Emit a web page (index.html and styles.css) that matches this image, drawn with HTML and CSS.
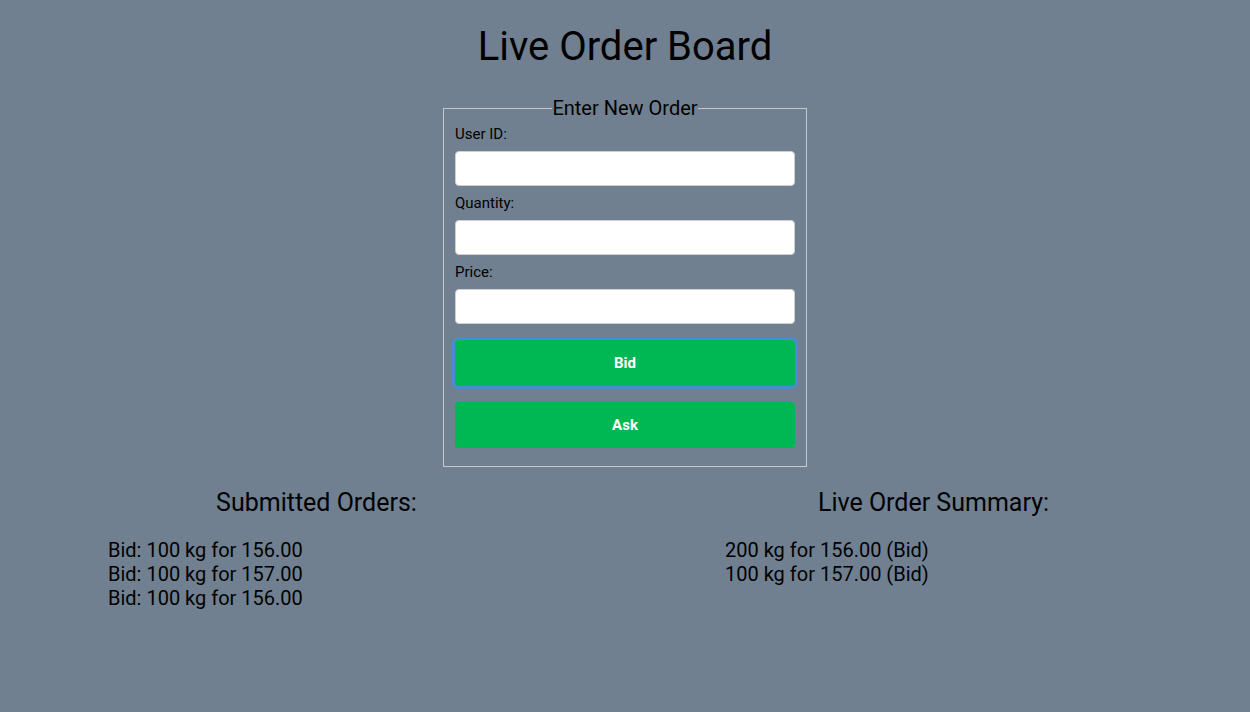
FILE: index.html
```html
<!DOCTYPE html>
<html lang="en">
<head>
<meta charset="utf-8">
<title>Live Order Board</title>
<link rel="stylesheet" href="styles.css">
</head>
<body>
<h1 class="title">Live Order Board</h1>
<form class="order-form">
  <fieldset class="order-fieldset">
    <legend class="order-legend">Enter New Order</legend>
    <label class="field-label field-label-first" for="userId">User ID:</label>
    <input class="field-input" id="userId" type="text">
    <label class="field-label" for="qty">Quantity:</label>
    <input class="field-input" id="qty" type="text">
    <label class="field-label" for="price">Price:</label>
    <input class="field-input" id="price" type="text">
    <button class="order-btn order-btn-focus" type="button">Bid</button>
    <button class="order-btn" type="button">Ask</button>
  </fieldset>
</form>
<div class="columns">
  <section class="column">
    <h2 class="column-title">Submitted Orders:</h2>
    <ul class="order-list">
      <li>Bid: 100 kg for 156.00</li>
      <li>Bid: 100 kg for 157.00</li>
      <li>Bid: 100 kg for 156.00</li>
    </ul>
  </section>
  <section class="column">
    <h2 class="column-title">Live Order Summary:</h2>
    <ul class="order-list">
      <li>200 kg for 156.00 (Bid)</li>
      <li>100 kg for 157.00 (Bid)</li>
    </ul>
  </section>
</div>
</body>
</html>
```

FILE: styles.css
```css
html {
  background: #708090;
}
body {
  margin: 8px;
  font-family: Roboto, "Liberation Sans", sans-serif;
  color: #000;
}
.title {
  font-size: 40px;
  font-weight: 400;
  text-align: center;
  margin: 16px 0 27px;
  line-height: 46px;
}
.order-form {
  display: flex;
  justify-content: center;
}
.order-fieldset {
  width: 340px;
  margin: 0;
  border: 1px solid #c8c8c8;
  padding: 0 11px 18px;
  display: flex;
  flex-direction: column;
}
.order-legend {
  font-size: 20px;
  padding: 0;
  margin: 0 auto;
  line-height: 23px;
}
.field-label {
  font-size: 15px;
  line-height: 17px;
  margin: 9px 0 8px;
}
.field-label-first {
  margin-top: 5.5px;
}
.field-input {
  box-sizing: border-box;
  width: 340px;
  height: 35px;
  border: 1px solid #cfcfcf;
  border-radius: 4px;
  background: #fff;
  margin: 0;
  padding: 0 8px;
  font-size: 14px;
}
.order-btn {
  width: 340px;
  height: 46px;
  border: none;
  border-radius: 4px;
  background: #00b853;
  color: #fff;
  font-family: Roboto, "Liberation Sans", sans-serif;
  font-weight: 700;
  font-size: 15px;
  margin-top: 16px;
}
.order-btn-focus {
  box-shadow: 0 0 0 3px #4a8bd6;
}
.columns {
  display: flex;
  margin-top: 21px;
}
.column {
  flex: 1;
}
.column-title {
  font-size: 25px;
  font-weight: 400;
  text-align: center;
  margin: 0 0 21px;
  line-height: 29px;
}
.order-list {
  list-style: none;
  margin: 0;
  padding: 0 0 0 100px;
  font-size: 20px;
  line-height: 24px;
}
```
